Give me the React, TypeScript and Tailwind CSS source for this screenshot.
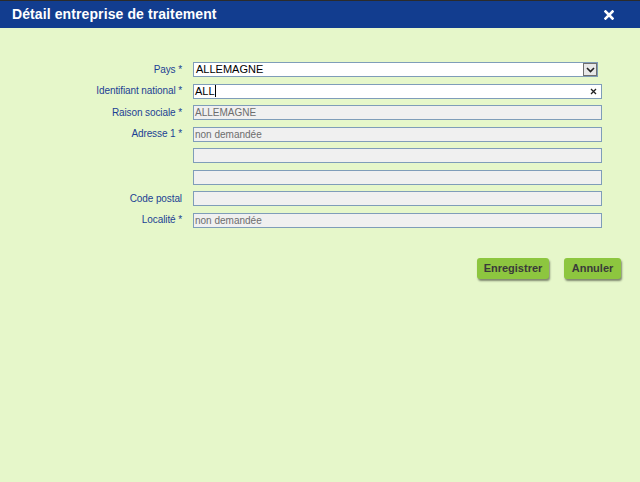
import React from "react";

// Champ de formulaire : libellé à droite, saisie à gauche
interface FieldRowProps {
  label?: string;
  children: React.ReactNode;
}

const FieldRow: React.FC<FieldRowProps> = ({ label, children }) => (
  <div className="flex items-center h-[15px]">
    <div className="w-[183px] shrink-0 pr-[1px] text-right text-[10px] tracking-[-0.1px] leading-none text-[#1c3f94]">
      {label}
    </div>
    <div className="ml-[10px] flex-1">{children}</div>
  </div>
);

const ReadOnlyInput: React.FC<{ value?: string }> = ({ value }) => (
  <div className="h-[15px] w-[409px] border border-[#7f9db9] bg-[#f0f0f0] px-[1px] text-[10px] leading-[13px] text-[#6d6d6d]">
    {value}
  </div>
);

export default function App() {
  return (
    <div
      className="w-[640px] h-[482px] bg-[#e6f7ca] flex flex-col"
      style={{ fontFamily: '"Liberation Sans", Arial, sans-serif' }}
    >
      {/* Barre de titre */}
      <div className="h-[1px] bg-[#2b2b2b]" />
      <div className="h-[27px] bg-[#123d8f] flex items-center justify-between pl-[12px] pr-[26px]">
        <span className="text-white font-bold text-[14px] tracking-[0.1px]">
          Détail entreprise de traitement
        </span>
        <svg width="10" height="10" viewBox="0 0 10 10">
          <path d="M1.5 1.5 L8.5 8.5 M8.5 1.5 L1.5 8.5" stroke="white" strokeWidth="2.6" strokeLinecap="square" />
        </svg>
      </div>

      {/* Formulaire */}
      <div className="flex flex-col gap-[6.5px] pt-[34px]">
        <FieldRow label="Pays *">
          <div className="h-[15px] w-[405px] border border-[#7f9db9] bg-white flex items-center">
            <span className="flex-1 pl-[2px] text-[11px] leading-none text-black">ALLEMAGNE</span>
            <div className="h-[13px] w-[14px] border border-[#707070] bg-[#e8e8e8] flex items-center justify-center">
              <svg width="9" height="6" viewBox="0 0 9 6">
                <path d="M1 1 L4.5 4.5 L8 1" stroke="#222" strokeWidth="1.6" fill="none" />
              </svg>
            </div>
          </div>
        </FieldRow>
        <FieldRow label="Identifiant national *">
          <div className="h-[15px] w-[409px] border border-[#7f9db9] bg-white flex items-center">
            <span className="pl-[1px] text-[11px] leading-none text-black">ALL</span>
            <span className="h-[12px] w-[1px] bg-black" />
            <span className="flex-1" />
            <svg width="7" height="7" viewBox="0 0 7 7" className="mr-[4px]">
              <path d="M1 1 L6 6 M6 1 L1 6" stroke="#222" strokeWidth="1.3" />
            </svg>
          </div>
        </FieldRow>
        <FieldRow label="Raison sociale *">
          <ReadOnlyInput value="ALLEMAGNE" />
        </FieldRow>
        <FieldRow label="Adresse 1 *">
          <ReadOnlyInput value="non demandée" />
        </FieldRow>
        <FieldRow>
          <ReadOnlyInput />
        </FieldRow>
        <FieldRow>
          <ReadOnlyInput />
        </FieldRow>
        <FieldRow label="Code postal">
          <ReadOnlyInput />
        </FieldRow>
        <FieldRow label="Localité *">
          <ReadOnlyInput value="non demandée" />
        </FieldRow>
      </div>

      {/* Actions */}
      <div className="flex justify-end gap-[15px] pr-[19px] pt-[30px]">
        <button className="h-[21px] w-[72px] rounded-[3px] bg-[#8dc63f] text-[11px] font-bold text-[#3a3a3a] shadow-[1px_2px_2px_rgba(0,0,0,0.45)]">
          Enregistrer
        </button>
        <button className="h-[21px] w-[57px] rounded-[3px] bg-[#8dc63f] text-[11px] font-bold text-[#3a3a3a] shadow-[1px_2px_2px_rgba(0,0,0,0.45)]">
          Annuler
        </button>
      </div>
    </div>
  );
}
